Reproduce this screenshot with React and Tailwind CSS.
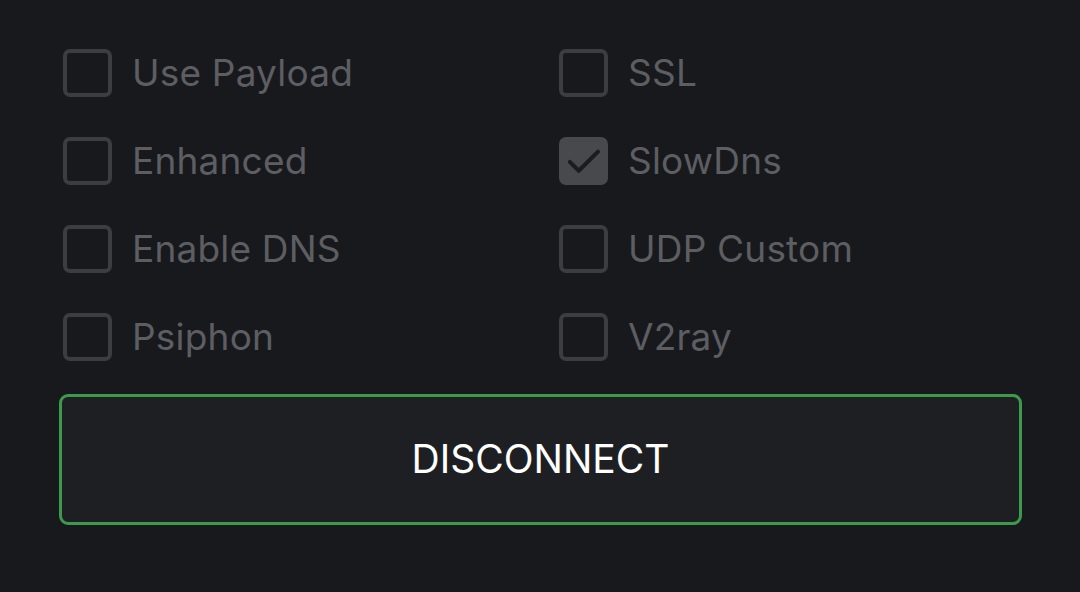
import React, { useState } from 'react';

const OPTIONS = [
  ['Use Payload', 'SSL'],
  ['Enhanced', 'SlowDns'],
  ['Enable DNS', 'UDP Custom'],
  ['Psiphon', 'V2ray'],
];

function Check({ label, checked, onToggle }) {
  return (
    <button onClick={onToggle} className="flex items-center gap-[20px] h-[88px] text-left">
      <span
        className={`w-[49px] h-[48px] rounded-[7px] border-[4px] flex items-center justify-center ${
          checked ? 'bg-[#48494d] border-[#48494d]' : 'border-[#3c3d41]'}`}>
        {checked && (
          <svg viewBox="0 0 24 24" className="w-[44px] h-[44px]" fill="none" stroke="#1b1c20" strokeWidth="2.4" strokeLinecap="round" strokeLinejoin="round">
            <path d="M4 12.5l5.2 5.2L20.5 6.5" />
          </svg>
        )}
      </span>
      <span className="text-[37px] text-[#5d5e62] tracking-[0.2px]">{label}</span>
    </button>
  );
}

export default function App() {
  const [checked, setChecked] = useState({ SlowDns: true });
  const toggle = (k) => setChecked(c => ({ ...c, [k]: !c[k] }));

  return (
    <div className="w-[1080px] h-[592px] bg-[#18191d] font-['Inter',sans-serif] pt-[29px] pl-[63px]">
      <div className="grid grid-cols-[496px_1fr]">
        {OPTIONS.flat().map(o => (
          <Check key={o} label={o} checked={!!checked[o]} onToggle={() => toggle(o)} />
        ))}
      </div>
      <button className="mt-[13px] -ml-[4px] w-[963px] h-[131px] rounded-[9px] border-[3px] border-[#3d9a4c] bg-[#1d1f23] text-white text-[39px]">
        DISCONNECT
      </button>
    </div>
  );
}
